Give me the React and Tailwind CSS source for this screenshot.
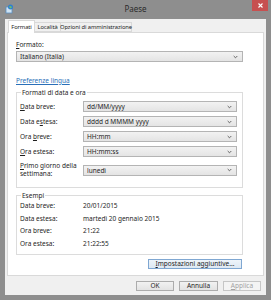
import React from "react";

function Chevron() {
  return (
    <svg width="5" height="4" viewBox="0 0 5 4" className="shrink-0">
      <path d="M0.7 1 L2.5 2.8 L4.3 1" fill="none" stroke="#555" strokeWidth="0.9" />
    </svg>
  );
}

function Select({ value, className = "" }) {
  return (
    <div
      className={
        "h-[11px] border border-[#b4b4b4] bg-gradient-to-b from-[#f2f2f2] to-[#e4e4e4] flex items-center pl-[3px] pr-[4px] " +
        className
      }
    >
      <span className="flex-1 leading-[9px] whitespace-nowrap overflow-hidden">{value}</span>
      <Chevron />
    </div>
  );
}

function Row({ label, value, tall }) {
  return (
    <div className={"flex items-center " + (tall ? "mt-[1px]" : "")}>
      <div className="w-[66px] pl-[3px] leading-[8px]">{label}</div>
      <Select value={value} className="flex-1 mr-[5px]" />
    </div>
  );
}

function Example({ label, value }) {
  return (
    <div className="flex items-center h-[12.5px]">
      <div className="w-[66px] pl-[3px]">{label}</div>
      <div>{value}</div>
    </div>
  );
}

export default function App() {
  return (
    <div className="w-[271px] h-[300px] bg-[#8e8e8e] flex flex-col overflow-hidden font-['Noto_Sans',sans-serif] text-[6.5px] text-[#1e1e1e]">
      {/* title bar */}
      <div className="h-[19px] relative flex items-center justify-center shrink-0">
        <svg width="9" height="10" viewBox="0 0 9 10" className="absolute left-[5px] top-[4px]">
          <rect x="1" y="3" width="6" height="6" fill="#cfe3f3" stroke="#5b8fc0" strokeWidth="0.8" />
          <circle cx="5.5" cy="3" r="2.5" fill="#2f7fd0" />
          <path d="M4 2.5 L6 2 L7 3.5 L5 4.5 Z" fill="#6fc06a" />
        </svg>
        <span className="text-[8px] text-[#2b2b2b] -mt-[1px]">Paese</span>
        <div className="absolute right-[3px] top-0 w-[16px] h-[11px] bg-[#c75050] flex items-center justify-center">
          <svg width="5" height="5" viewBox="0 0 5 5">
            <path d="M0.5 0.5 L4.5 4.5 M4.5 0.5 L0.5 4.5" stroke="#fff" strokeWidth="1.1" />
          </svg>
        </div>
      </div>

      {/* client area */}
      <div className="flex-1 mx-[5px] mb-[5px] bg-[#f0f0f0] flex flex-col">
        {/* tabs */}
        <div className="mt-[1px] px-[2px] h-[12px] flex items-end relative z-10 text-[5.8px] tracking-[-0.1px]">
          <div className="ml-[1px] w-[27px] h-[13px] -mb-[1px] bg-white border border-b-0 border-[#d9d9d9] flex items-center justify-center whitespace-nowrap">
            Formati
          </div>
          <div className="w-[26px] h-[10px] border border-l-0 border-[#d9d9d9] bg-[#f0f0f0] flex items-center justify-center whitespace-nowrap">
            Località
          </div>
          <div className="w-[71px] h-[10px] border border-l-0 border-[#d9d9d9] bg-[#f0f0f0] flex items-center justify-center whitespace-nowrap">
            Opzioni di amministrazione
          </div>
        </div>

        {/* panel */}
        <div className="mx-[2px] h-[244px] bg-white border border-[#d9d9d9] pl-[8px] pr-[20px] flex flex-col">
          <div className="mt-[7px] leading-[9px]">
            <u>F</u>ormato:
          </div>
          <Select value="Italiano (Italia)" className="mt-[2px]" />
          <div className="mt-[14px] leading-[9px] text-[#2a6fb8] underline">Preferenze lingua</div>

          <div className="mt-[7px] h-[96px] border border-[#dcdcdc] relative pt-[8px] flex flex-col gap-[4px]">
            <span className="absolute -top-[5px] left-[4px] bg-white px-[1px] leading-[9px]">
              Formati di data e ora
            </span>
            <Row label={<><u>D</u>ata breve:</>} value="dd/MM/yyyy" />
            <Row label={<>Data e<u>s</u>tesa:</>} value="dddd d MMMM yyyy" />
            <Row label={<>Ora <u>b</u>reve:</>} value="HH:mm" />
            <Row label={<><u>O</u>ra estesa:</>} value="HH:mm:ss" />
            <Row
              tall
              label={
                <>
                  <u>P</u>rimo giorno della
                  <br />
                  settimana:
                </>
              }
              value="lunedì"
            />
          </div>

          <div className="mt-[7px] h-[60px] border border-[#dcdcdc] relative pt-[4px]">
            <span className="absolute -top-[5px] left-[4px] bg-white px-[1px] leading-[9px]">Esempi</span>
            <Example label="Data breve:" value="20/01/2015" />
            <Example label="Data estesa:" value="martedì 20 gennaio 2015" />
            <Example label="Ora breve:" value="21:22" />
            <Example label="Ora estesa:" value="21:22:55" />
          </div>

          <div className="mt-[4px] flex justify-end">
            <div className="mr-[1px] w-[94px] h-[10px] border border-[#7fa7d2] bg-gradient-to-b from-[#eef4fa] to-[#dde8f3] flex items-center justify-center">
              <span>
                <u>I</u>mpostazioni aggiuntive...
              </span>
            </div>
          </div>
        </div>

        {/* buttons */}
        <div className="mt-[5px] pr-[5px] flex justify-end gap-[5px]">
          <div className="w-[38px] h-[10px] border border-[#acacac] bg-gradient-to-b from-[#f2f2f2] to-[#e3e3e3] flex items-center justify-center">
            OK
          </div>
          <div className="w-[39px] h-[10px] border border-[#acacac] bg-gradient-to-b from-[#f2f2f2] to-[#e3e3e3] flex items-center justify-center">
            Annulla
          </div>
          <div className="w-[38px] h-[10px] border border-[#c6c6c6] bg-[#f4f4f4] text-[#a3a3a3] flex items-center justify-center">
            <span>
              <u>A</u>pplica
            </span>
          </div>
        </div>
      </div>
    </div>
  );
}
